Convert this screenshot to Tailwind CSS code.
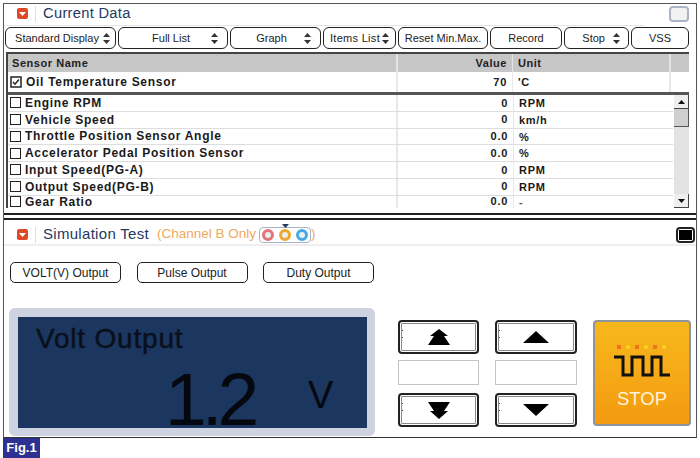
<!DOCTYPE html>
<html lang="en">
  <head>
    <meta charset="UTF-8" />
    <title>Current Data</title>
    <script src="https://cdn.jsdelivr.net/npm/@tailwindcss/browser@4"></script>
  </head>
  <body class="bg-white w-[700px] h-[458px] overflow-hidden font-['Liberation_Sans',Arial,sans-serif] text-black">
    <div class="pt-[3px] pl-[3px] pr-[3px]">
      <div class="w-[694px] h-[435px] border border-[#555] border-b-[#333] flex flex-col overflow-hidden">
        <!-- current data -->
        <div class="h-[22px] shrink-0 flex items-center pb-[3px] pl-[13px] relative">
          <span class="w-[11px] h-[11px] rounded-[2px] bg-[#e0482a] flex items-center justify-center">
            <svg width="7" height="4" viewBox="0 0 7 4"><path d="M0 0h7L3.500 4z" fill="#fff" /></svg>
          </span>
          <span class="ml-[7px] h-[16px] border-l border-[#ddd]"></span>
          <span class="ml-[7px] text-[14.7px] tracking-[0.3px] text-[#24395f]">Current Data</span>
          <span class="ml-auto mr-[7px] w-[20px] h-[16px] rounded-[4px] border-2 border-[#aab4c4] bg-[#f2f2f2]"></span>
          <span class="absolute left-0 right-[52px] bottom-0 border-b border-[#e4e4e4]"></span>
        </div>
        <div class="h-[22px] mt-[1px] ml-[1px] shrink-0 flex gap-[2px] text-[11px] text-[#222]">
          <div class="w-[111px] rounded-[6px] border border-[#222] flex items-center justify-center gap-[4px] pl-[4px]">Standard Display <svg width="7" height="11" viewBox="0 0 7 11"><path d="M3.500 0L7 4H0zM0 7H7L3.500 11z" fill="#333" /></svg></div>
          <div class="w-[110px] rounded-[6px] border border-[#222] flex items-center"><span class="flex-1 text-center pl-[12px]">Full List</span><svg class="mr-[9px]" width="7" height="11" viewBox="0 0 7 11"><path d="M3.500 0L7 4H0zM0 7H7L3.500 11z" fill="#333" /></svg></div>
          <div class="w-[91px] rounded-[6px] border border-[#222] flex items-center"><span class="flex-1 text-center pl-[8px]">Graph</span><svg class="mr-[9px]" width="7" height="11" viewBox="0 0 7 11"><path d="M3.500 0L7 4H0zM0 7H7L3.500 11z" fill="#333" /></svg></div>
          <div class="w-[73px] rounded-[6px] border border-[#222] flex items-center justify-center gap-[2px] tracking-[0.3px]">Items List <svg width="7" height="11" viewBox="0 0 7 11"><path d="M3.500 0L7 4H0zM0 7H7L3.500 11z" fill="#333" /></svg></div>
          <div class="w-[90px] rounded-[6px] border border-[#222] flex items-center justify-center">Reset Min.Max.</div>
          <div class="w-[72px] rounded-[6px] border border-[#222] flex items-center justify-center">Record</div>
          <div class="w-[65px] rounded-[6px] border border-[#222] flex items-center justify-end gap-[8px] pr-[8px]">Stop <svg width="7" height="11" viewBox="0 0 7 11"><path d="M3.500 0L7 4H0zM0 7H7L3.500 11z" fill="#333" /></svg></div>
          <div class="w-[58px] rounded-[6px] border border-[#222] flex items-center justify-center">VSS</div>
        </div>

        <!-- table -->
        <div class="mt-[3px] ml-[2px] w-[683px] h-[156px] shrink-0 border-l-2 border-t-2 border-[#444] text-[12px] font-bold tracking-[0.7px] text-[#1a1a1a] overflow-hidden">
          <div class="h-[18px] flex bg-[#c6c6c6] text-[11px] tracking-[0.55px] leading-[18px] text-[#222]">
            <div class="w-[390px] pl-[4px] border-r-2 border-[#e4e4e4]">Sensor Name</div>
            <div class="w-[115px] pr-[5px] text-right border-r border-[#e4e4e4]">Value</div>
            <div class="w-[158px] pl-[5px] border-r-2 border-[#e4e4e4]">Unit</div>
          </div>
          <div class="h-[20px] flex leading-[20px] border-b-[3px] border-[#555] box-content">
            <div class="w-[390px] pl-[2px] border-r-2 border-[#e8e8e8] flex items-center gap-[4px]">
              <svg width="12" height="12" viewBox="0 0 12 12"><rect x="1" y="1" width="10" height="10" fill="#fff" stroke="#222" stroke-width="1.500" /><path d="M3 6l2 2.200L9 3.500" fill="none" stroke="#222" stroke-width="1.500" /></svg>
              Oil Temperature Sensor
            </div>
            <div class="w-[115px] pr-[5px] text-right text-[11px] border-r border-[#e8e8e8]">70</div>
            <div class="w-[158px] pl-[5px] text-[11px] border-r-2 border-[#e8e8e8]">'C</div>
          </div>
          <div class="flex">
            <div class="w-[665px] shrink-0">
              <div class="h-[16.75px] flex items-center border-b border-[#ddd]"><div class="w-[390px] h-full pl-[2px] border-r-2 border-[#e8e8e8] flex items-center gap-[4px]"><span class="w-[11px] h-[11px] border-[1.5px] border-[#222]"></span>Engine RPM</div><div class="w-[115px] pr-[5px] text-right text-[11px]">0</div><div class="pl-[5px] h-full border-l border-[#e8e8e8] text-[11px] leading-[17px]">RPM</div></div>
              <div class="h-[16.75px] flex items-center border-b border-[#ddd]"><div class="w-[390px] h-full pl-[2px] border-r-2 border-[#e8e8e8] flex items-center gap-[4px]"><span class="w-[11px] h-[11px] border-[1.5px] border-[#222]"></span>Vehicle Speed</div><div class="w-[115px] pr-[5px] text-right text-[11px]">0</div><div class="pl-[5px] h-full border-l border-[#e8e8e8] text-[11px] leading-[17px]">km/h</div></div>
              <div class="h-[16.75px] flex items-center border-b border-[#ddd]"><div class="w-[390px] h-full pl-[2px] border-r-2 border-[#e8e8e8] flex items-center gap-[4px]"><span class="w-[11px] h-[11px] border-[1.5px] border-[#222]"></span>Throttle Position Sensor Angle</div><div class="w-[115px] pr-[5px] text-right text-[11px]">0.0</div><div class="pl-[5px] h-full border-l border-[#e8e8e8] text-[11px] leading-[17px]">%</div></div>
              <div class="h-[16.75px] flex items-center border-b border-[#ddd]"><div class="w-[390px] h-full pl-[2px] border-r-2 border-[#e8e8e8] flex items-center gap-[4px]"><span class="w-[11px] h-[11px] border-[1.5px] border-[#222]"></span>Accelerator Pedal Position Sensor</div><div class="w-[115px] pr-[5px] text-right text-[11px]">0.0</div><div class="pl-[5px] h-full border-l border-[#e8e8e8] text-[11px] leading-[17px]">%</div></div>
              <div class="h-[16.75px] flex items-center border-b border-[#ddd]"><div class="w-[390px] h-full pl-[2px] border-r-2 border-[#e8e8e8] flex items-center gap-[4px]"><span class="w-[11px] h-[11px] border-[1.5px] border-[#222]"></span>Input Speed(PG-A)</div><div class="w-[115px] pr-[5px] text-right text-[11px]">0</div><div class="pl-[5px] h-full border-l border-[#e8e8e8] text-[11px] leading-[17px]">RPM</div></div>
              <div class="h-[16.75px] flex items-center border-b border-[#ddd]"><div class="w-[390px] h-full pl-[2px] border-r-2 border-[#e8e8e8] flex items-center gap-[4px]"><span class="w-[11px] h-[11px] border-[1.5px] border-[#222]"></span>Output Speed(PG-B)</div><div class="w-[115px] pr-[5px] text-right text-[11px]">0</div><div class="pl-[5px] h-full border-l border-[#e8e8e8] text-[11px] leading-[17px]">RPM</div></div>
              <div class="h-[13px] flex items-center border-b border-[#ddd]"><div class="w-[390px] h-full pl-[2px] border-r-2 border-[#e8e8e8] flex items-center gap-[4px]"><span class="w-[11px] h-[11px] border-[1.5px] border-[#222]"></span>Gear Ratio</div><div class="w-[115px] pr-[5px] text-right text-[11px]">0.0</div><div class="pl-[5px] h-full border-l border-[#e8e8e8] text-[11px] leading-[13px] text-[#555]">-</div></div>
            </div>
            <div class="w-[15px] h-[113px] ml-[1px] bg-[#e3e3e3] flex flex-col justify-between">
              <div>
                <div class="h-[14px] bg-[#eee] border-r border-b border-[#444] flex items-center justify-center"><svg width="7" height="4" viewBox="0 0 7 4"><path d="M0 4h7L3.500 0z" fill="#111" /></svg></div>
                <div class="h-[18px] bg-[#cfcfcf] border-r border-b border-[#555]"></div>
              </div>
              <div class="h-[14px] bg-[#eee] border-r border-b border-[#444] flex items-center justify-center"><svg width="7" height="4" viewBox="0 0 7 4"><path d="M0 0h7L3.500 4z" fill="#111" /></svg></div>
            </div>
          </div>
        </div>

        <!-- double divider -->
        <div class="mt-[5px] h-[7px] shrink-0 border-y-2 border-[#222]"></div>

        <!-- simulation test -->
        <div class="h-[26px] shrink-0 flex items-center pt-[5px] pl-[13px] border-b-2 border-[#eee]">
          <span class="w-[11px] h-[11px] rounded-[2px] bg-[#e0482a] flex items-center justify-center">
            <svg width="7" height="4" viewBox="0 0 7 4"><path d="M0 0h7L3.500 4z" fill="#fff" /></svg>
          </span>
          <span class="ml-[7px] h-[16px] border-l border-[#ddd]"></span>
          <span class="ml-[7px] text-[15px] tracking-[0.3px] text-[#24395f]">Simulation Test</span>
          <span class="ml-[8px] text-[13.5px] text-[#f0a860] flex items-center">(Channel B Only
            <span class="relative ml-[3px] w-[52px] h-[16px] rounded-[4px] border border-[#a9b3c8] flex items-center justify-between px-[2px]">
              <span class="w-[12px] h-[12px] rounded-full border-[3.5px] border-[#e2737a] bg-[#eee]"></span>
              <span class="w-[12px] h-[12px] rounded-full border-[3.5px] border-[#f0a72e] bg-[#eee]"></span>
              <span class="w-[12px] h-[12px] rounded-full border-[3.5px] border-[#45a9e6] bg-[#eee]"></span>
              <svg class="absolute left-[22px] -top-[4px]" width="7" height="4" viewBox="0 0 7 4"><path d="M0 0h7L3.500 4z" fill="#24395f" /></svg>
            </span>)</span>
          <span class="ml-auto mr-[1px] w-[19px] h-[16px] rounded-[4px] border-2 border-[#222] p-[1px]"><span class="block w-full h-full bg-black"></span></span>
        </div>

        <div class="mt-[16px] ml-[6px] flex gap-[15.5px] text-[12px] text-[#222] shrink-0">
          <div class="w-[111px] h-[21px] rounded-[5px] border border-[#222] flex items-center justify-center">VOLT(V) Output</div>
          <div class="w-[111px] h-[21px] rounded-[5px] border border-[#222] flex items-center justify-center">Pulse Output</div>
          <div class="w-[111px] h-[21px] rounded-[5px] border border-[#222] flex items-center justify-center">Duty Output</div>
        </div>

        <div class="flex mt-[25px] ml-[5px]">
          <!-- lcd -->
          <div class="w-[366px] h-[128px] rounded-[6px] bg-[#cdd3e0] pt-[9px] pl-[9px] pr-[8px] pb-[8px] shrink-0">
            <div class="w-full h-full bg-[#1b365f] relative">
              <div class="absolute left-[18px] top-[7px] text-[28px] tracking-[0.8px] leading-[30px] text-[#0a0f1c] [-webkit-text-stroke:0.4px_#0a0f1c]">Volt Output</div>
              <div class="absolute left-[147px] top-[54px] text-[75px] tracking-[-5px] leading-[56px] text-[#05080f]">1.2</div>
              <div class="absolute left-[290px] top-[56px] text-[38px] leading-[44px] text-[#05080f]">V</div>
            </div>
          </div>

          <div class="flex ml-[23px] mt-[12px] gap-[16px]">
            <div class="w-[81px] flex flex-col gap-[6px]">
              <div class="relative h-[34px] rounded-[4px] border-2 border-[#222] outline outline-1 -outline-offset-4 outline-[#888] flex items-center justify-center">
                <span class="absolute left-[2px] top-[8px] w-[1px] h-[1px] bg-[#444]"></span><span class="absolute left-[2px] top-[15px] w-[1px] h-[1px] bg-[#444]"></span>
                <svg width="22" height="17" viewBox="0 0 22 17"><path d="M11 0L20 7H16L22 16H0L6 7H2z" fill="#000" /></svg>
              </div>
              <div class="h-[25px] border border-[#c4c4c4]"></div>
              <div class="relative h-[34px] mt-[2px] rounded-[4px] border-2 border-[#222] outline outline-1 -outline-offset-4 outline-[#888] flex items-center justify-center">
                <span class="absolute left-[2px] top-[8px] w-[1px] h-[1px] bg-[#444]"></span><span class="absolute left-[2px] top-[15px] w-[1px] h-[1px] bg-[#444]"></span>
                <svg width="22" height="17" viewBox="0 0 22 17"><path d="M0 0H22L16 9H20L11 17L2 9H6z" fill="#000" /></svg>
              </div>
            </div>
            <div class="w-[82px] flex flex-col gap-[6px]">
              <div class="relative h-[34px] rounded-[4px] border-2 border-[#222] outline outline-1 -outline-offset-4 outline-[#888] flex items-center justify-center">
                <span class="absolute left-[2px] top-[8px] w-[1px] h-[1px] bg-[#444]"></span><span class="absolute left-[2px] top-[15px] w-[1px] h-[1px] bg-[#444]"></span>
                <svg width="26" height="12" viewBox="0 0 26 12"><path d="M13 0L26 12H0z" fill="#000" /></svg>
              </div>
              <div class="h-[25px] border border-[#c4c4c4]"></div>
              <div class="relative h-[34px] mt-[2px] rounded-[4px] border-2 border-[#222] outline outline-1 -outline-offset-4 outline-[#888] flex items-center justify-center">
                <span class="absolute left-[2px] top-[8px] w-[1px] h-[1px] bg-[#444]"></span><span class="absolute left-[2px] top-[15px] w-[1px] h-[1px] bg-[#444]"></span>
                <svg width="26" height="12" viewBox="0 0 26 12"><path d="M0 0H26L13 12z" fill="#000" /></svg>
              </div>
            </div>
            <div class="w-[98px] h-[106px] rounded-[4px] border-2 border-[#8d949c] bg-gradient-to-b from-[#f7b81c] to-[#f39a10] flex flex-col items-center">
              <svg class="mt-[23px]" width="58" height="32" viewBox="0 0 58 32">
                <rect x="4" y="0" width="4" height="4" fill="#f0741e" /><circle cx="15" cy="2" r="2" fill="#ffd21e" /><rect x="22" y="0" width="4" height="4" fill="#f0741e" /><circle cx="33" cy="2" r="2" fill="#ffd21e" /><rect x="40" y="0" width="4" height="4" fill="#f0741e" /><circle cx="51" cy="2" r="2" fill="#ffd21e" />
                <path d="M1 12H10V30H19V12H30V30H39V12H48V30H57" fill="none" stroke="#111" stroke-width="3" />
              </svg>
              <span class="mt-[11px] text-[18.5px] leading-[22px] text-[#fff3d8]">STOP</span>
            </div>
          </div>
        </div>
      </div>
      <div class="w-[37px] h-[20px] bg-[#2e3192] text-white text-[13px] font-bold leading-[20px] text-center">Fig.1</div>
    </div>
  </body>
</html>
